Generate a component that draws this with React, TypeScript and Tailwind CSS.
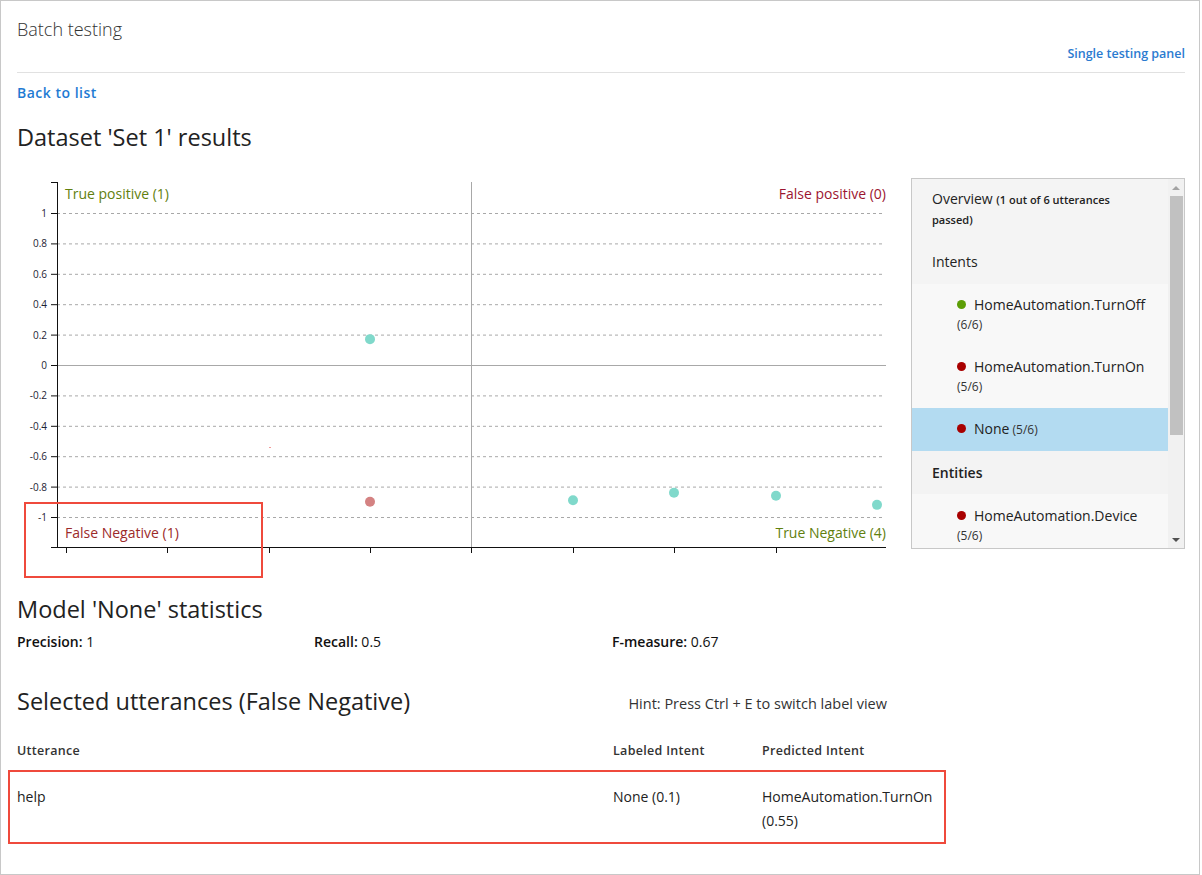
import React from "react";

type Point = { x: number; v: number; tone: "ok" | "bad" };

const Y_TICKS = [1, 0.8, 0.6, 0.4, 0.2, 0, -0.2, -0.4, -0.6, -0.8, -1];
const X_TICKS = [66, 167, 269, 370, 471, 573, 674, 776];
const POINTS: Point[] = [
  { x: 370, v: 0.17, tone: "ok" },
  { x: 370, v: -0.9, tone: "bad" },
  { x: 573, v: -0.89, tone: "ok" },
  { x: 674, v: -0.84, tone: "ok" },
  { x: 776, v: -0.86, tone: "ok" },
  { x: 877, v: -0.92, tone: "ok" },
];

const yOf = (v: number) => 364 - v * 152;

function Chart() {
  return (
    <svg width={880} height={392} viewBox="17 170 880 392" className="block shrink-0">
      {/* dashed grid */}
      {Y_TICKS.filter((t) => t !== 0).map((t) => (
        <line key={t} x1={57} x2={882} y1={yOf(t) + 0.5} y2={yOf(t) + 0.5} stroke="#a8a8a8" strokeDasharray="3 3" />
      ))}
      {/* zero line + center divider */}
      <line x1={57} x2={886} y1={364.5} y2={364.5} stroke="#a8a8a8" />
      <line x1={471.5} x2={471.5} y1={181} y2={552} stroke="#a8a8a8" />
      {/* axes */}
      <line x1={57.5} x2={57.5} y1={181} y2={547} stroke="#111" />
      <line x1={51} x2={57} y1={181.5} y2={181.5} stroke="#111" />
      <line x1={51} x2={886} y1={546.5} y2={546.5} stroke="#111" />
      {Y_TICKS.map((t) => (
        <g key={t}>
          <line x1={51} x2={57} y1={yOf(t) + 0.5} y2={yOf(t) + 0.5} stroke="#111" />
          <text x={47} y={yOf(t) + 4} textAnchor="end" fontSize={10} fill="#1d2333" fontFamily="'Open Sans', sans-serif">
            {t}
          </text>
        </g>
      ))}
      {X_TICKS.map((x) => (
        <line key={x} x1={x + 0.5} x2={x + 0.5} y1={546} y2={552} stroke="#111" />
      ))}
      {/* stray marker */}
      <rect x={269.5} y={446} width={1} height={1} fill="#e53935" />
      {POINTS.map((p, i) => (
        <circle key={i} cx={p.x} cy={yOf(p.v)} r={5} fill={p.tone === "ok" ? "#80d9cb" : "#d48282"} />
      ))}
      <g fontSize={14} fontFamily="'Open Sans', sans-serif">
        <text x={65} y={198} fill="#62800e">True positive (1)</text>
        <text x={886} y={198} textAnchor="end" fill="#9c1530">False positive (0)</text>
        <text x={65} y={537} fill="#9c2a2a">False Negative (1)</text>
        <text x={886} y={537} textAnchor="end" fill="#62800e">True Negative (4)</text>
      </g>
    </svg>
  );
}

function Dot({ color }: { color: string }) {
  return <span className="inline-block w-[9px] h-[9px] rounded-full mr-[8px] translate-y-[-1px]" style={{ backgroundColor: color }} />;
}

function ResultItem({ name, count, color, selected, inline, top = 10 }: { name: string; count: string; color: string; selected?: boolean; inline?: boolean; top?: number }) {
  return (
    <div
      className={`pl-[45px] pr-2 shrink-0 ${inline ? "h-[43px] flex items-center" : "h-[62px]"} ${selected ? "bg-[#b3dbf1]" : "bg-[#f8f8f8]"}`}
      style={inline ? undefined : { paddingTop: top }}
    >
      <div className="text-[14px] leading-[20px] text-[#222] whitespace-nowrap">
        <Dot color={color} />
        {name}
        {inline && <span className="text-[12px] text-[#333]"> {count}</span>}
      </div>
      {!inline && <div className="text-[12px] leading-[20px] text-[#333]">{count}</div>}
    </div>
  );
}

function ResultsPanel() {
  return (
    <div className="mt-[7px] ml-[14px] w-[274px] h-[371px] border border-[#c8c8c8] bg-[#f4f4f4] flex overflow-hidden">
      <div className="flex-1 min-w-0 flex flex-col">
        <div className="pl-[20px] pt-[10px] h-[59px] shrink-0">
          <div className="text-[14px] leading-[20px] text-[#222] font-medium">
            Overview <span className="text-[11px] font-semibold">(1 out of 6 utterances</span>
          </div>
          <div className="text-[11px] leading-[20px] font-semibold text-[#222]">passed)</div>
        </div>
        <div className="pl-[20px] h-[46px] shrink-0 flex items-center text-[14px] font-medium text-[#222]">Intents</div>
        <ResultItem name="HomeAutomation.TurnOff" count="(6/6)" color="#5c9e06" top={11} />
        <ResultItem name="HomeAutomation.TurnOn" count="(5/6)" color="#a80000" top={11} />
        <ResultItem name="None" count="(5/6)" color="#a80000" selected inline />
        <div className="pl-[20px] h-[43px] shrink-0 flex items-center text-[14px] font-semibold text-[#222] bg-[#f3f3f3]">Entities</div>
        <ResultItem name="HomeAutomation.Device" count="(5/6)" color="#a80000" top={12} />
      </div>
      <div className="w-[16px] bg-[#f1f1f1] flex flex-col items-center">
        <div className="h-[17px] flex items-center justify-center">
          <span className="w-0 h-0 border-l-[4px] border-r-[4px] border-b-[4px] border-l-transparent border-r-transparent border-b-[#a3a3a3]" />
        </div>
        <div className="w-[13px] h-[239px] bg-[#c1c1c1]" />
        <div className="flex-1" />
        <div className="h-[17px] flex items-center justify-center">
          <span className="w-0 h-0 border-l-[4px] border-r-[4px] border-t-[4px] border-l-transparent border-r-transparent border-t-[#505050]" />
        </div>
      </div>
    </div>
  );
}

export default function App() {
  return (
    <div className="w-[1200px] h-[875px] border border-[#c8c8c8] bg-white relative font-['Open_Sans',sans-serif] text-[#222] overflow-hidden">
      <div className="pl-[16px] pr-[14px]">
        {/* header */}
        <div className="pt-[15px] text-[18px] leading-[26px] font-light text-[#333]">Batch testing</div>
        <div className="flex justify-end mt-[3px] text-[12.5px] leading-[18px] font-semibold text-[#2b7bd0]">Single testing panel</div>
        <div className="mt-[9px] border-t border-[#e1e1e1]" />
        <div className="mt-[10px] text-[14px] leading-[20px] font-semibold text-[#1f7bd3] tracking-[0.5px]">Back to list</div>

        <h2 className="mt-[19px] text-[23.5px] leading-[30px] text-[#222]">Dataset 'Set 1' results</h2>

        <div className="mt-[19px] flex items-start relative">
          <Chart />
          <ResultsPanel />
          <div className="absolute left-[7px] top-[331px] w-[239px] h-[76px] border-2 border-[#ef4a3c]" />
        </div>

        <h2 className="mt-[31px] text-[23.5px] leading-[30px] text-[#222]">Model 'None' statistics</h2>
        <div className="mt-[8px] grid grid-cols-[297px_298px_1fr] text-[14px] leading-[20px] text-[#111]">
          <div><span className="font-semibold">Precision:</span> 1</div>
          <div><span className="font-semibold">Recall:</span> 0.5</div>
          <div><span className="font-semibold">F-measure:</span> 0.67</div>
        </div>

        <div className="mt-[34px] flex items-end w-[870px]">
          <h2 className="flex-1 text-[23.5px] leading-[30px] text-[#222]">Selected utterances (False Negative)</h2>
          <div className="text-[14.5px] leading-[20px] text-[#333] mb-[2px]">Hint: Press Ctrl + E to switch label view</div>
        </div>

        <div className="mt-[26px] grid grid-cols-[596px_149px_1fr] text-[12.5px] leading-[18px] font-semibold text-[#333] tracking-[0.3px]">
          <div>Utterance</div>
          <div>Labeled Intent</div>
          <div>Predicted Intent</div>
        </div>
        <div className="relative mt-[10px] grid grid-cols-[596px_149px_1fr] text-[14px] leading-[24px] text-[#222] pt-[15px]">
          <div>help</div>
          <div>None (0.1)</div>
          <div>HomeAutomation.TurnOn<br />(0.55)</div>
          <div className="absolute left-[-9px] top-0 w-[938px] h-[74px] border-2 border-[#ef4a3c]" />
        </div>
      </div>
    </div>
  );
}
